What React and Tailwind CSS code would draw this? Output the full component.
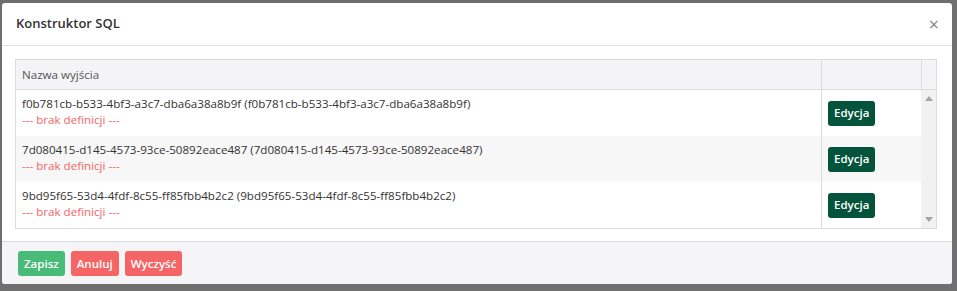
// App.jsx — Konstruktor SQL modal
const rows = [
  'f0b781cb-b533-4bf3-a3c7-dba6a38a8b9f',
  '7d080415-d145-4573-93ce-50892eace487',
  '9bd95f65-53d4-4fdf-8c55-ff85fbb4b2c2',
];

export default function App() {
  return (
    <div
      className="w-[957px] h-[291px] bg-[#6f6f6f] pt-[3px] pl-[2px] overflow-hidden"
      style={{ fontFamily: '"Open Sans", "Noto Sans", Arial, sans-serif' }}
    >
      <div className="w-[950px] h-[281px] bg-white rounded-[3px] flex flex-col overflow-hidden">
        {/* nagłówek */}
        <div className="h-[43px] flex items-center justify-between pl-[14px] pr-[13px] border-b border-[#e4e4e7]">
          <span className="text-[13px] font-semibold text-[#333]">Konstruktor SQL</span>
          <span className="text-[18px] leading-none text-[#888]">×</span>
        </div>

        {/* tabela */}
        <div className="pl-[13px] pr-[15px] pt-[13px] pb-[12px]">
          <div className="border border-[#dcdcdf] text-[11.6px] text-[#333]">
            <div className="flex h-[30px] bg-[#f4f4f6] border-b border-[#dcdcdf]">
              <div className="flex-1 flex items-center px-[6px] text-[#555]">Nazwa wyjścia</div>
              <div className="w-[100px] border-l border-[#dcdcdf]" />
              <div className="w-[15px] border-l border-[#dcdcdf]" />
            </div>
            <div className="flex">
              <div className="flex-1">
                {rows.map((id, i) => (
                  <div key={id} className={`flex h-[46px] ${i % 2 ? 'bg-[#f7f7f7]' : 'bg-white'}`}>
                    <div className="flex-1 px-[6px] pt-[6px] leading-[16px]">
                      <div>{id} ({id})</div>
                      <div className="text-[#f56565]">--- brak definicji ---</div>
                    </div>
                    <div className="w-[100px] border-l border-[#dcdcdf] flex items-center px-[6px]">
                      <button className="h-[25px] px-[6px] rounded-[3px] bg-[#03543a] text-white text-[11.5px] font-semibold">
                        Edycja
                      </button>
                    </div>
                  </div>
                ))}
              </div>
              <div className="w-[15px] bg-[#f1f1f1] flex flex-col items-center justify-between py-[6px]">
                <svg width="8" height="5" viewBox="0 0 8 5"><path d="M0 5 L4 0 L8 5 Z" fill="#a3a3a3" /></svg>
                <svg width="8" height="5" viewBox="0 0 8 5"><path d="M0 0 L8 0 L4 5 Z" fill="#a3a3a3" /></svg>
              </div>
            </div>
          </div>
        </div>

        {/* stopka */}
        <div className="flex-1 bg-[#f5f5f7] border-t border-[#dcdcdf] flex gap-[6px] pl-[16px] pt-[9px]">
          <button className="h-[25px] px-[6px] rounded-[3px] bg-[#48bb78] text-white text-[11.5px] font-semibold">Zapisz</button>
          <button className="h-[25px] px-[6px] rounded-[3px] bg-[#f56565] text-white text-[11.5px] font-semibold">Anuluj</button>
          <button className="h-[25px] px-[6px] rounded-[3px] bg-[#f56565] text-white text-[11.5px] font-semibold">Wyczyść</button>
        </div>
      </div>
    </div>
  );
}
